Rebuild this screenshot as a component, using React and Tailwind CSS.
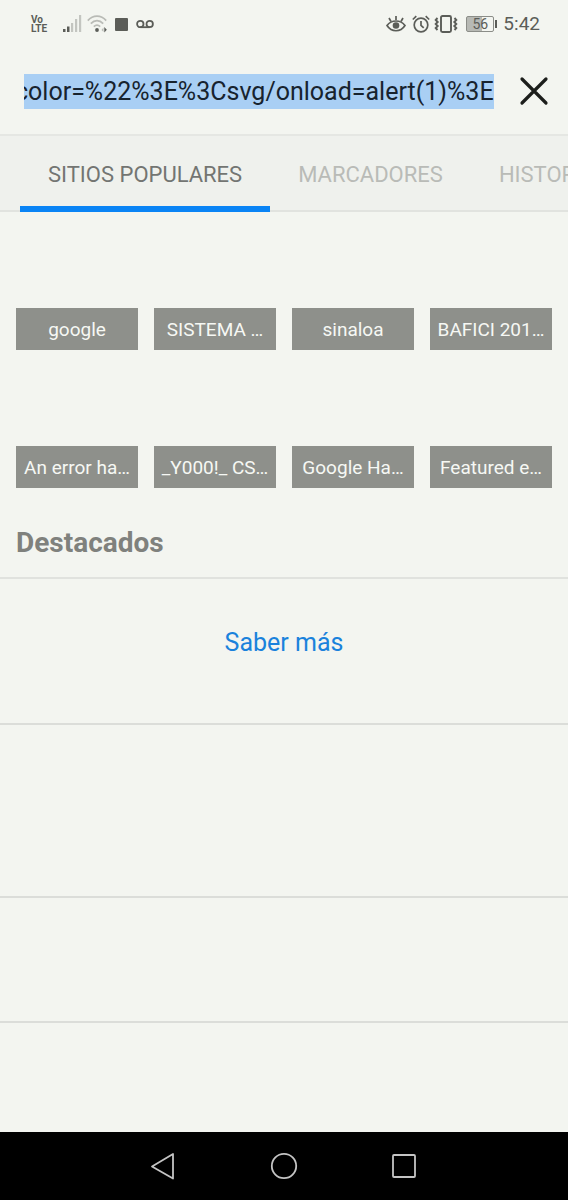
import React, { useEffect, useRef, useState } from "react";

const tabs = ["SITIOS POPULARES", "MARCADORES", "HISTORIAL"];

const sites = [
  "google",
  "SISTEMA …",
  "sinaloa",
  "BAFICI 201…",
  "An error ha…",
  "_Y000!_ CS…",
  "Google Ha…",
  "Featured e…",
];

const SignalIcon = () => (
  <svg width="20" height="18" viewBox="0 0 20 18" aria-hidden="true">
    <path d="M0 14h2.500v3H0zM4 11.500h2.500V17H4z" fill="#5b5d58" />
    <path d="M8 8h2.200v9H8zM12 4h2.200v13H12zM16 0h2.200v17H16z" fill="#c3c5c0" />
  </svg>
);

const WifiIcon = () => (
  <svg width="20" height="18" viewBox="0 0 20 18" fill="none" aria-hidden="true">
    <g stroke="#b9bbb6" strokeWidth="1.700">
      <path d="M.8 5.600C6-.4 14-.4 19.200 5.600" />
      <path d="M3.800 8.600c3.800-4 8.600-4 12.400 0" />
      <path d="M6.800 11.600c2-1.900 4.400-1.900 6.400 0" />
    </g>
    <circle cx="10" cy="15" r="1.900" fill="#5b5d58" />
    <path d="M14.500 15l2-2.500V17z" fill="#b9bbb6" />
    <path d="M17.300 12v5.500l2.500-2.700z" fill="#5b5d58" />
  </svg>
);

const VoicemailIcon = () => (
  <svg width="18" height="10" viewBox="0 0 18 10" fill="none" stroke="#5b5d58" strokeWidth="1.800" aria-hidden="true">
    <circle cx="4.300" cy="5" r="3.200" />
    <circle cx="13.700" cy="5" r="3.200" />
    <path d="M4.300 8.200h9.400" />
  </svg>
);

const EyeIcon = () => (
  <svg width="20" height="18" viewBox="0 0 20 18" fill="none" stroke="#5b5d58" strokeWidth="1.700" aria-hidden="true">
    <path d="M1 10.500C5.500 4.500 14.500 4.500 19 10.500C14.500 17.500 5.500 17.500 1 10.500z" />
    <circle cx="10" cy="10.500" r="3.300" fill="#5b5d58" stroke="none" />
    <path d="M10 1v4M3 3l2 3.500M17 3l-2 3.500" />
  </svg>
);

const AlarmIcon = () => (
  <svg width="18" height="18" viewBox="0 0 18 18" fill="none" stroke="#5b5d58" strokeWidth="1.700" aria-hidden="true">
    <circle cx="9" cy="10" r="6.800" />
    <path d="M9 6v4.300l2.700 2.500M.8 4.500l3.500-3.300M17.200 4.500l-3.500-3.300" />
  </svg>
);

const VibrateIcon = () => (
  <svg width="24" height="18" viewBox="0 0 24 18" fill="none" stroke="#5b5d58" aria-hidden="true">
    <rect x="7" y="1" width="10" height="16" rx="1.500" strokeWidth="1.900" />
    <path
      d="M3.500 3l-1.800 2 2 2-2 2 2 2-2 2 1.800 2M20.500 3l1.800 2-2 2 2 2-2 2 2 2-1.800 2"
      strokeWidth="1.900"
    />
  </svg>
);

const StatusBar = () => (
  <header className="flex h-12 items-center justify-between pr-7 pl-[31px] text-[#5b5d58]">
    <div className="flex items-center">
      <div className="w-8 text-[10px] leading-[9px] font-bold">
        Vo
        <br />
        LTE
      </div>
      <SignalIcon />
      <div className="ml-1">
        <WifiIcon />
      </div>
      <div className="ml-2 size-[13px] rounded-[1px] bg-[#5b5d58]" />
      <div className="ml-2">
        <VoicemailIcon />
      </div>
    </div>
    <div className="flex items-center">
      <EyeIcon />
      <div className="ml-1.5">
        <AlarmIcon />
      </div>
      <div className="ml-1">
        <VibrateIcon />
      </div>
      <div className="ml-2 flex items-center">
        <div className="flex h-4 w-7 items-center justify-center rounded-[2px] border border-[#8b8d88] bg-linear-to-r from-[#b7b9b4] from-56% to-[#f3f5f0] to-56% text-[14px] leading-[14px]">
          56
        </div>
        <div className="ml-px h-2 w-[2px] bg-[#5b5d58]" />
      </div>
      <span className="ml-1.5 text-[19px] leading-6">5:42</span>
    </div>
  </header>
);

const AddressBar = () => {
  const [url, setUrl] = useState("color=%22%3E%3Csvg/onload=alert(1)%3E");
  const inputRef = useRef(null);

  // keep the end of a long address in view
  useEffect(() => {
    inputRef.current.scrollLeft = inputRef.current.scrollWidth;
  }, []);

  return (
    <div className="flex h-[88px] items-center border-b-2 border-[#e5e7e3] pr-[18px] pl-6">
      <input
        ref={inputRef}
        type="text"
        aria-label="Dirección"
        value={url}
        onChange={(e) => setUrl(e.target.value)}
        className="h-[35px] min-w-0 flex-1 bg-[#a9cff4] text-[25px] leading-[35px] text-[#17232e] outline-none"
      />
      <button type="button" aria-label="Borrar" className="ml-6" onClick={() => setUrl("")}>
        <svg width="32" height="32" viewBox="0 0 32 32" stroke="#1c1e1b" strokeWidth="3.200" strokeLinecap="round">
          <path d="M4 4l24 24M28 4L4 28" />
        </svg>
      </button>
    </div>
  );
};

const NavBar = () => (
  <nav className="mt-auto flex h-[68px] items-center justify-center gap-[88px] bg-black">
    <button type="button" aria-label="Atrás">
      <svg width="32" height="32" viewBox="0 0 32 32" fill="none" stroke="#c4c4c4" strokeWidth="1.800" strokeLinejoin="round">
        <path d="M25 4v24.500L4 16.500z" />
      </svg>
    </button>
    <button type="button" aria-label="Inicio">
      <svg width="32" height="32" viewBox="0 0 32 32" fill="none" stroke="#c4c4c4" strokeWidth="1.800">
        <circle cx="16" cy="16" r="12.200" />
      </svg>
    </button>
    <button type="button" aria-label="Recientes">
      <svg width="32" height="32" viewBox="0 0 32 32" fill="none" stroke="#c4c4c4" strokeWidth="1.800">
        <rect x="5" y="5" width="22" height="22" rx="1" />
      </svg>
    </button>
  </nav>
);

const App = () => {
  const [active, setActive] = useState(0);

  return (
    <div className="flex min-h-screen flex-col bg-[#f3f5f0] font-[Roboto,sans-serif]">
      <StatusBar />
      <AddressBar />

      <div className="flex h-[76px] overflow-x-clip border-b-2 border-[#e1e3df] bg-[#eff1ed] pl-5">
        {tabs.map((tab, idx) => (
          <button
            key={tab}
            type="button"
            onClick={() => setActive(idx)}
            className={`h-[76px] shrink-0 border-b-[6px] px-7 pt-1.5 text-[22px] ${
              active === idx ? "border-[#0a84f5] text-[#737572]" : "border-transparent text-[#b9bbb7]"
            }`}
          >
            {tab}
          </button>
        ))}
      </div>

      <main>
        <div className="grid grid-cols-4 gap-4 px-4 pt-4">
          {sites.map((site) => (
            <a key={site} href="#" className="flex aspect-square items-end">
              <span className="h-[42px] w-full truncate bg-[#8e908b] text-center text-[19px] leading-[44px] text-[#f6f8f4]">
                {site}
              </span>
            </a>
          ))}
        </div>

        <h2 className="border-b-2 border-[#e0e2de] px-4 pt-[37px] pb-4 text-[28px] leading-9 font-bold text-[#7f817d]">
          Destacados
        </h2>
        <div className="flex h-[146px] justify-center border-b-2 border-[#dbddd9] pt-12">
          <a href="#" className="text-[25px] leading-8 text-[#1a82dc]">
            Saber más
          </a>
        </div>
        <div className="h-[173px] border-b-2 border-[#dbddd9]" />
        <div className="h-[125px] border-b-2 border-[#dbddd9]" />
      </main>

      <NavBar />
    </div>
  );
};

export default App;
